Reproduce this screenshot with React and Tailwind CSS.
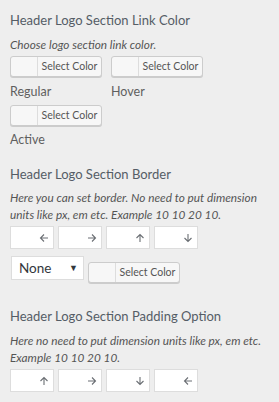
import React from "react";

const font = { fontFamily: 'Lato, "Open Sans", sans-serif' };

const ColorButton = ({ className = "" }) => (
  <button
    type="button"
    className={`flex h-[21px] w-[92px] items-stretch rounded-[3px] border border-[#cccccc] bg-[#f7f7f7] shadow-[0_1px_0_#cccccc] ${className}`}
  >
    <span className="w-[27px] border-r border-[#dddddd]" />
    <span className="flex flex-1 items-center justify-center text-[10.5px] text-[#555555]">
      Select Color
    </span>
  </button>
);

const arrows = {
  left: "M9 5H1.5M5 1.5L1.5 5 5 8.5",
  right: "M1 5h7.5M5 1.5L8.5 5 5 8.5",
  up: "M5 9V1.5M1.5 5L5 1.5 8.5 5",
  down: "M5 1v7.5M1.5 5L5 8.5 8.5 5",
};

const ArrowInput = ({ dir }) => (
  <div className="flex h-[23px] w-[44px] items-center justify-end border border-[#dddddd] bg-white pr-[4px]">
    <svg width="10" height="10" viewBox="0 0 10 10" fill="none" stroke="#6b6f74" strokeWidth="1.1">
      <path d={arrows[dir]} />
    </svg>
  </div>
);

const Heading = ({ children, className = "" }) => (
  <h3 className={`text-[13px] leading-5 text-[#555d66] ${className}`}>{children}</h3>
);

const Desc = ({ children, className = "" }) => (
  <p className={`whitespace-nowrap text-[11.8px] italic leading-[17px] text-[#555555] ${className}`}>
    {children}
  </p>
);

const Label = ({ children, className = "" }) => (
  <div className={`text-[12.5px] leading-[18px] text-[#5f5f5f] ${className}`}>{children}</div>
);

export default function App() {
  return (
    <div style={font} className="min-h-[402px] w-[279px] bg-[#eeeeee] px-[10px] pt-[10px]">
      <Heading>Header Logo Section Link Color</Heading>
      <Desc className="mt-[6px]">Choose logo section link color.</Desc>
      <div className="mt-[3px] flex gap-[9px]">
        <div>
          <ColorButton />
          <Label className="mt-[6px]">Regular</Label>
        </div>
        <div>
          <ColorButton />
          <Label className="mt-[6px]">Hover</Label>
        </div>
      </div>
      <ColorButton className="mt-[4px]" />
      <Label className="mt-[5px]">Active</Label>

      <Heading className="mt-[15px]">Header Logo Section Border</Heading>
      <Desc className="mt-[5px]">
        Here you can set border. No need to put dimension
        <br />
        units like px, em etc. Example 10 10 20 10.
      </Desc>
      <div className="mt-[3px] flex gap-[4px]">
        <ArrowInput dir="left" />
        <ArrowInput dir="right" />
        <ArrowInput dir="up" />
        <ArrowInput dir="down" />
      </div>
      <div className="mt-[7px] flex items-start gap-[4px] pl-px">
        <div className="flex h-[24px] w-[73px] items-center justify-between border border-[#dddddd] bg-white pl-[7px] pr-[5px] text-[13.5px] text-[#32373c]">
          <span>None</span>
          <span className="text-[9px]">▼</span>
        </div>
        <ColorButton className="mt-[6px]" />
      </div>

      <Heading className="mt-[23px]">Header Logo Section Padding Option</Heading>
      <Desc className="mt-[6px] leading-4">
        Here no need to put dimension units like px, em etc.
        <br />
        Example 10 10 20 10.
      </Desc>
      <div className="mt-[3px] flex gap-[4px]">
        <ArrowInput dir="up" />
        <ArrowInput dir="right" />
        <ArrowInput dir="down" />
        <ArrowInput dir="left" />
      </div>
    </div>
  );
}
